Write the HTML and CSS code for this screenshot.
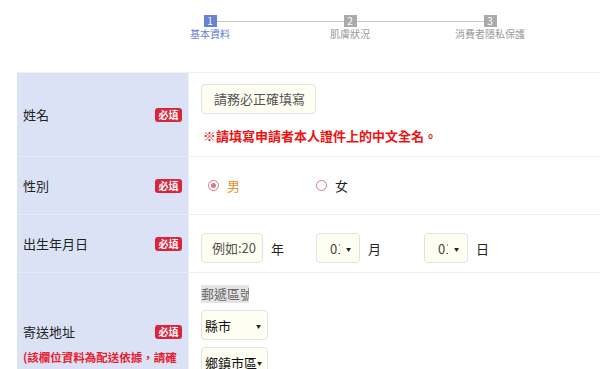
FILE: index.html
```html
<!DOCTYPE html>
<html lang="zh-Hant">
<head>
    <meta charset="UTF-8">
    <meta name="viewport" content="width=device-width, initial-scale=1.0">
    <title>基本資料</title>
    <link rel="stylesheet" href="styles.css">
</head>
<body>

    <div class="steps">
        <div class="step active">
            <div class="step-track"><span class="track hidden"></span><span class="num">1</span><span class="track"></span></div>
            <div class="step-name">基本資料</div>
        </div>
        <div class="step">
            <div class="step-track"><span class="track"></span><span class="num">2</span><span class="track"></span></div>
            <div class="step-name">肌膚狀況</div>
        </div>
        <div class="step">
            <div class="step-track"><span class="track"></span><span class="num">3</span><span class="track hidden"></span></div>
            <div class="step-name">消費者隱私保護</div>
        </div>
    </div>

    <div class="form">
        <!-- 姓名 -->
        <div class="row">
            <div class="cell-label">
                <div class="label-line"><span>姓名</span><span class="badge">必填</span></div>
            </div>
            <div class="cell-field row-name">
                <div class="text-input name-input">請務必正確填寫</div>
                <div class="note">※請填寫申請者本人證件上的中文全名。</div>
            </div>
        </div>

        <!-- 性別 -->
        <div class="row">
            <div class="cell-label">
                <div class="label-line"><span>性別</span><span class="badge">必填</span></div>
            </div>
            <div class="cell-field row-gender">
                <label class="radio checked"><span class="dot"></span>男</label>
                <label class="radio"><span class="dot"></span>女</label>
            </div>
        </div>

        <!-- 出生年月日 -->
        <div class="row">
            <div class="cell-label">
                <div class="label-line"><span>出生年月日</span><span class="badge">必填</span></div>
            </div>
            <div class="cell-field row-birth">
                <div class="date-group year"><div class="text-input year-input">例如:20</div><span>年</span></div>
                <div class="date-group"><div class="select small"><span class="clip">01</span><span class="arrow">▼</span></div><span>月</span></div>
                <div class="date-group"><div class="select small"><span class="clip">01</span><span class="arrow">▼</span></div><span>日</span></div>
            </div>
        </div>

        <!-- 寄送地址 -->
        <div class="row">
            <div class="cell-label">
                <div class="label-line"><span>寄送地址</span><span class="badge">必填</span></div>
                <div class="label-note">(該欄位資料為配送依據，請確實填寫)</div>
            </div>
            <div class="cell-field row-address">
                <div class="zip"><span>郵遞區號</span></div>
                <div class="select wide"><span>縣市</span><span class="arrow">▼</span></div>
                <div class="select wide"><span>鄉鎮市區</span><span class="arrow">▼</span></div>
                <div class="text-input addr-input"></div>
            </div>
        </div>
    </div>

</body>
</html>
```

FILE: styles.css
```css
body {
    margin: 0;
    font-family: "Noto Sans CJK TC", "Noto Sans", sans-serif;
    color: #222;
    background-color: #fff;
    overflow: hidden;
}

/* steps */
.steps {
    display: flex;
    margin-left: 140px;
    padding-top: 15px;
}
.step {
    width: 140px;
    display: flex;
    flex-direction: column;
    align-items: center;
}
.step-track {
    display: flex;
    align-items: center;
    width: 100%;
    height: 12px;
}
.track {
    flex: 1;
    height: 1px;
    background-color: #c8c8c8;
}
.track.hidden {
    visibility: hidden;
}
.num {
    width: 13px;
    height: 12px;
    background-color: #aaa;
    color: #fff;
    font-size: 10px;
    line-height: 12px;
    text-align: center;
}
.step-name {
    font-size: 10px;
    line-height: 12px;
    margin-top: 1px;
    color: #9a9a9a;
}
.step.active .num {
    background-color: #6782d8;
}
.step.active .step-name {
    color: #5f7ed8;
}

/* form table */
.form {
    margin: 32px 0 0 17px;
    width: 640px;
    border-top: 1px solid #eef0f4;
}
.row {
    display: grid;
    grid-template-columns: 171px 1fr;
    border-bottom: 1px solid #eceef3;
}
.cell-label {
    background-color: #dce2f6;
    padding: 0 6px;
    display: flex;
    flex-direction: column;
    justify-content: center;
    border-bottom: 1px solid #e6eaf8;
    margin-bottom: -1px;
}
.label-line {
    display: flex;
    justify-content: space-between;
    align-items: center;
    font-size: 13px;
    line-height: 20px;
}
.badge {
    width: 27px;
    height: 14px;
    border-radius: 3px;
    background-color: #d8253a;
    color: #fff;
    font-size: 10px;
    font-weight: bold;
    line-height: 14px;
    text-align: center;
}
.label-note {
    margin-top: 6px;
    font-size: 11.5px;
    font-weight: bold;
    line-height: 18px;
    color: #e8202e;
}
.cell-field {
    border-left: 1px solid #eef0f8;
    padding: 0 12px;
    font-size: 13px;
}

.text-input {
    height: 28px;
    border: 1px solid #e2e2e2;
    border-radius: 4px;
    background-color: #fefef2;
    color: #555;
    font-size: 13px;
    line-height: 28px;
    box-sizing: content-box;
}

/* name row */
.row-name {
    padding-top: 11px;
    padding-bottom: 10px;
}
.name-input {
    width: 101px;
    padding-left: 12px;
}
.note {
    margin-top: 12px;
    line-height: 20px;
    font-weight: bold;
    color: #ee1111;
    margin-left: 2px;
}

/* gender row */
.row-gender {
    display: flex;
    align-items: center;
    height: 57px;
    padding-left: 19px;
}
.radio {
    display: flex;
    align-items: center;
    width: 108px;
    line-height: 20px;
}
.dot {
    width: 9px;
    height: 9px;
    border: 1.5px solid #d9788a;
    border-radius: 50%;
    margin-right: 8px;
    display: flex;
    align-items: center;
    justify-content: center;
}
.radio.checked {
    color: #e6902a;
}
.radio.checked .dot::after {
    content: "";
    width: 5px;
    height: 5px;
    border-radius: 50%;
    background-color: #d9788a;
}

/* birthday row */
.row-birth {
    display: flex;
    align-items: center;
    padding-top: 18px;
    padding-bottom: 9px;
}
.date-group {
    display: flex;
    align-items: center;
    width: 108px;
}
.date-group.year {
    width: 115px;
}
.date-group > span {
    margin-left: 8px;
}
.year-input {
    width: 50px;
    padding-left: 10px;
}
.select {
    display: flex;
    align-items: center;
    height: 28px;
    border: 1px solid #e2e2e2;
    border-radius: 4px;
    background-color: #fefef2;
    overflow: hidden;
    white-space: nowrap;
}
.select.small {
    width: 42px;
}
.clip {
    display: block;
    width: 10px;
    margin-left: 13px;
    overflow: hidden;
    color: #444;
}
.arrow {
    font-size: 5px;
    margin-left: 6px;
    color: #222;
}

/* address row */
.row-address {
    padding-top: 12px;
    padding-bottom: 18px;
}
.zip {
    width: 48px;
    height: 18px;
    background-color: #fefef2;
    overflow: hidden;
    white-space: nowrap;
    line-height: 18px;
}
.zip span {
    background-color: #e4e4e4;
    color: #666;
}
.select.wide {
    width: 62px;
    margin-top: 7px;
    padding-left: 3px;
    box-sizing: content-box;
    color: #111;
}
.select.wide .arrow {
    margin-left: auto;
    margin-right: 6px;
}
.select.wide span:first-child {
    flex-shrink: 0;
}
.addr-input {
    width: 300px;
    margin-top: 7px;
}
```
